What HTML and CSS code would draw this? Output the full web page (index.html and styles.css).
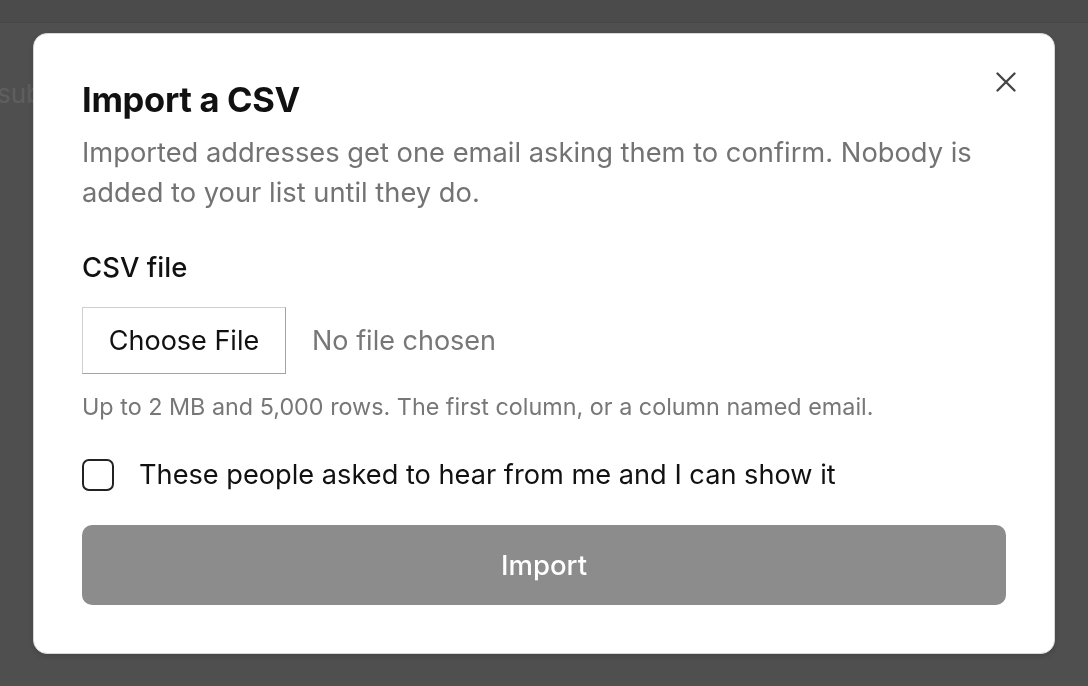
FILE: index.html
```html
<!DOCTYPE html>
<html lang="en">
<head>
<meta charset="utf-8">
<title>Import a CSV</title>
<link rel="stylesheet" href="styles.css">
</head>
<body>
<header class="topbar"></header>
<main class="page">
  <p class="page-text">sub</p>
</main>
<div class="overlay">
  <section class="modal" role="dialog" aria-labelledby="modal-title">
    <button class="close" type="button" aria-label="Close">
      <svg width="20" height="20" viewBox="0 0 20 20" aria-hidden="true">
        <path d="M1.5 1.5 L18.5 18.5 M18.5 1.5 L1.5 18.5" stroke="#444" stroke-width="2.3" stroke-linecap="round" fill="none"/>
      </svg>
    </button>
    <h1 id="modal-title" class="title">Import a CSV</h1>
    <p class="desc">Imported addresses get one email asking them to confirm. Nobody is added to your list until they do.</p>
    <div class="field-label">CSV file</div>
    <div class="file-row">
      <span class="file-btn">Choose File</span>
      <span class="file-name">No file chosen</span>
    </div>
    <p class="hint">Up to 2 MB and 5,000 rows. The first column, or a column named email.</p>
    <label class="check-row">
      <span class="checkbox"></span>
      <span class="check-text">These people asked to hear from me and I can show it</span>
    </label>
    <button class="import" type="button">Import</button>
  </section>
</div>
</body>
</html>
```
FILE: styles.css
```css
* { box-sizing: border-box; }
html, body { margin: 0; padding: 0; }
body {
  background: #c5c5c5;
  font-family: Inter, "Noto Sans", "Liberation Sans", sans-serif;
  width: 1088px;
  height: 686px;
  overflow: hidden;
}
.topbar {
  height: 23px;
  background: #bcbcbc;
  border-bottom: 1px solid #afafaf;
}
.page { padding-top: 53px; }
.page-text {
  margin: 0 0 0 -3px;
  font-size: 26px;
  line-height: 36px;
  color: #ebebeb;
}
.overlay {
  position: fixed;
  inset: 0;
  background: rgba(0, 0, 0, 0.6);
  padding: 33px;
}
.modal {
  position: relative;
  background: #fff;
  border: 1px solid #d8d8d8;
  border-radius: 14px;
  padding: 46px 48px 48px 48px;
  display: flex;
  flex-direction: column;
  box-shadow: 0 2px 6px rgba(0,0,0,0.15);
}
.close {
  position: absolute;
  top: 38px;
  right: 38px;
  width: 20px;
  height: 20px;
  padding: 0;
  border: 0;
  background: none;
  display: flex;
}
.title {
  margin: 0;
  font-size: 34.5px;
  line-height: 40px;
  font-weight: 650;
  color: #111;
  letter-spacing: -0.3px;
}
.desc {
  margin: 13px 0 0 0;
  font-size: 27.3px;
  line-height: 40px;
  color: #737373;
}
.field-label {
  margin-top: 34px;
  font-size: 27.5px;
  line-height: 40px;
  font-weight: 500;
  color: #111;
}
.file-row {
  margin-top: 20px;
  display: flex;
  align-items: center;
  gap: 26px;
}
.file-btn {
  width: 204px;
  height: 67px;
  display: flex;
  align-items: center;
  justify-content: center;
  border: 1px solid;
  border-color: #cfcfcf #a3a3a3 #a3a3a3 #cfcfcf;
  background: #fff;
  font-size: 27px;
  color: #111;
}
.file-name {
  font-size: 27px;
  color: #777;
}
.hint {
  margin: 18px 0 0 0;
  font-size: 23.35px;
  line-height: 30px;
  color: #777;
}
.check-row {
  margin-top: 37px;
  display: flex;
  align-items: center;
  gap: 25px;
}
.checkbox {
  width: 32px;
  height: 32px;
  border: 2px solid #222;
  border-radius: 7px;
  flex: none;
}
.check-text {
  font-size: 27.2px;
  line-height: 32px;
  color: #111;
}
.import {
  margin-top: 34px;
  height: 80px;
  width: 100%;
  border: 0;
  border-radius: 10px;
  background: #8c8c8c;
  color: #fff;
  font-family: inherit;
  font-size: 27.5px;
  font-weight: 500;
}
```
